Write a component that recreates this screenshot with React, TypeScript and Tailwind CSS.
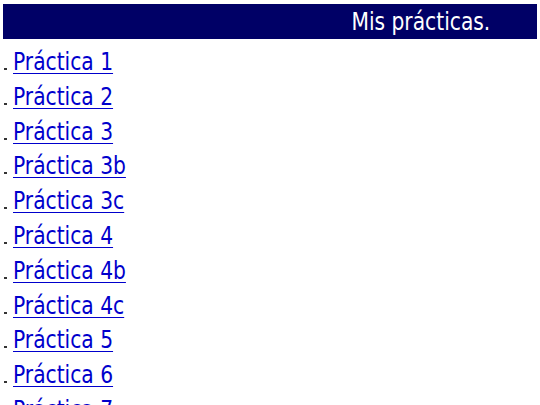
const practicas = [
  "Práctica 1",
  "Práctica 2",
  "Práctica 3",
  "Práctica 3b",
  "Práctica 3c",
  "Práctica 4",
  "Práctica 4b",
  "Práctica 4c",
  "Práctica 5",
  "Práctica 6",
  "Práctica 7",
]

export default function App() {
  return (
    <div className="h-[405px] w-[540px] overflow-hidden bg-white font-['DejaVu_Sans_Condensed','DejaVu_Sans',sans-serif]">
      <div className="mx-[3px] mt-[4px] flex h-[35px] items-center justify-end bg-[#000066] pr-[47px] text-[25px] leading-none text-white">
        <span className="inline-block origin-right scale-x-[0.9]">Mis prácticas.</span>
      </div>
      <ul className="mt-[6px] pl-[4px]">
        {practicas.map((p) => (
          <li key={p} className="flex items-baseline text-[25px] leading-[34.8px]">
            <span className="mr-[6px] inline-block h-[2px] w-[3px] bg-[#333]" />
            <a
              href="#"
              className="inline-block origin-left scale-x-[0.9] text-[#0000cc] underline decoration-1 underline-offset-[3px]"
            >
              {p}
            </a>
          </li>
        ))}
      </ul>
    </div>
  )
}
